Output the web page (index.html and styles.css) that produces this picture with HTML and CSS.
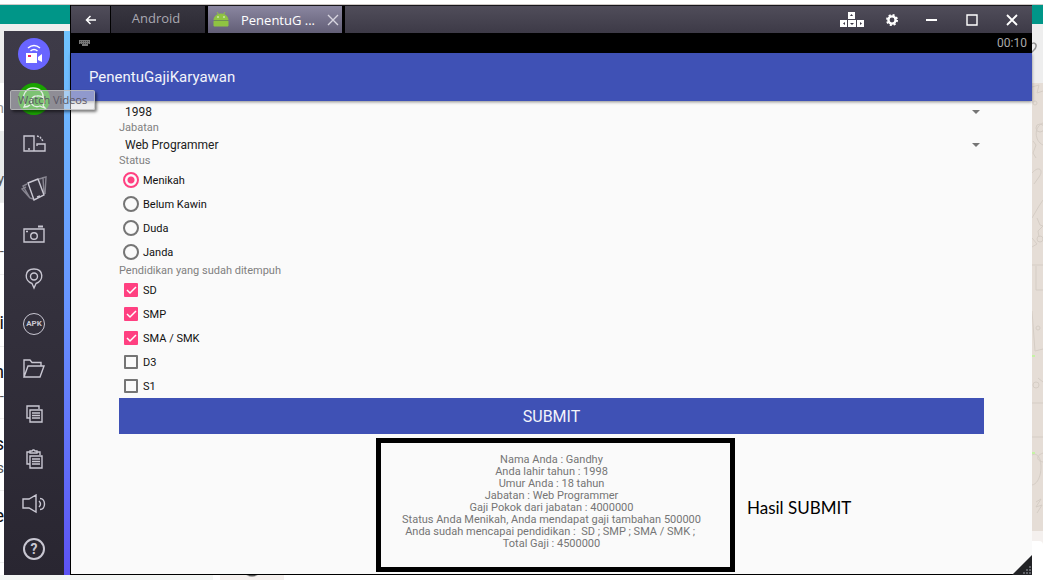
FILE: index.html
```html
<!DOCTYPE html>
<html lang="id">
<head>
<meta charset="utf-8">
<title>PenentuGajiKaryawan</title>
<link rel="stylesheet" href="styles.css">
</head>
<body>
<div class="desktop">
  <div class="backdrop" aria-hidden="true">
    <div class="backdrop-teal"></div>
    <div class="backdrop-main">
      <div class="chat-list">
        <div class="chat-head"></div>
        <div class="chat-search">n</div>
        <div class="chat-row selected"><span></span><span>y</span></div>
        <div class="chat-row"><span></span><span>-</span></div>
        <div class="chat-row"><span></span><b>i</b></div>
        <div class="chat-row"><b>m</b><span>-</span></div>
        <div class="chat-row"><b>s</b><span>s</span></div>
        <div class="chat-row"><b>e</b><span></span></div>
      </div>
      <div class="chat-pane">
        <svg class="pane-head" viewBox="0 0 11 59"><path d="M-2 21c5-5 9 1 3 6l-3 3" fill="none" stroke="#919191" stroke-width="1.5"/></svg>
        <svg class="doodles" viewBox="0 0 11 448" preserveAspectRatio="none"><g fill="none" stroke="#d5cdc5"><path d="M0 4l7-2-2 8 6-2M11 40c-9 3-9 18 0 22M1 58l3 4-3 8 3 5M0 90c7-8 12-3 7 4l-5 7M0 135l7-12 4-6M5 135l3 7 3 1-5 5 1 6M0 155l5 6-5 3M0 182h11M4 183v24h7M0 228l3 40 8-2M6 295l5 4M0 320h11M0 354h11M0 372c12-6 12 28 0 30M11 370c-8 3-6 8 0 9M4 419l5-3-5 8 6-2-5 8"/><circle cx="3" cy="20" r="2"/><circle cx="8" cy="45" r="4"/><circle cx="8" cy="156" r="3"/><circle cx="6" cy="245" r="2"/><circle cx="4" cy="302" r="3"/></g><path d="M0 273h3M0 370h3" stroke="#c5f3a5" stroke-width="2"/></svg>
        <div class="composer"></div>
      </div>
    </div>
    <div class="backdrop-foot"><i></i><b></b></div>
  </div>

  <div class="emulator">
    <nav class="sidebar" aria-label="Tools">
      <button class="tool" aria-label="Record"><svg viewBox="0 0 34 34" width="34" height="34"><circle cx="17" cy="17" r="16" fill="#6965ff"/><path d="M11 11q6-5 12 0M13.500 14q3.500-3 7 0" fill="none" stroke="#fff" stroke-width="1.500"/><path d="M9 16h11v10H9zM21 20l4-3v8l-4-2z" fill="#fff"/><rect x="11" y="18" width="3" height="2" fill="#f0245a"/></svg></button>
      <button class="tool" aria-label="Watch Videos"><svg viewBox="0 0 34 34" width="34" height="34"><circle cx="17" cy="17" r="16" fill="#19a300"/><g fill="none" stroke="#e6f7e2" stroke-width="1.300"><path d="M13 23c-2 2-4 2-6 2 1-2 2-3 1-5-4-6 1-14 8-14s11 5 10 10"/><path d="M26 23c4-4 0-10-6-9-6 0-8 7-3 10 2 1 4 1 6 0 2 1 4 2 5 2-1-1-2-2-2-3z"/></g></svg></button>
      <button class="tool" aria-label="Rotate"><svg viewBox="0 0 24 20" width="24" height="20"><g class="line"><path d="M2 2h10v15H2zM15 12v-2h8v7H12M6 15h2"/><path d="M15 2l3 1 3 4" stroke-dasharray="2 1"/></g></svg></button>
      <button class="tool" aria-label="Shake"><svg viewBox="0 0 28 26" width="28" height="26"><g class="line"><path d="M8 7l10-4 6 16-10 5z"/><path d="M17 21l3-1"/><path d="M7 8l-4 2 7 12 3 1M6 11l-4 2 8 9M19 3l4-1 1 16M22 2l4-1-1 17" opacity=".55"/></g></svg></button>
      <button class="tool" aria-label="Screenshot"><svg viewBox="0 0 24 20" width="24" height="20"><g class="line"><path d="M2 5h20v13H2z"/><circle cx="12" cy="12" r="3.300"/><path d="M16 2.500h5" stroke-width="2"/><path d="M4 7.500h2"/></g></svg></button>
      <button class="tool" aria-label="Location"><svg viewBox="0 0 20 24" width="20" height="24"><g class="line"><path d="M10 21l-2-4.500C-0 14 0 2 10 2s10 12 2 14.500z"/><circle cx="10" cy="9.500" r="3.500"/></g></svg></button>
      <button class="tool" aria-label="Install APK"><span class="apk">APK</span></button>
      <button class="tool" aria-label="Open folder"><svg viewBox="0 0 24 22" width="24" height="22"><g class="line"><path d="M2 19V2h6l2 2.500h9V8M2 19h16l4-11H6z"/></g></svg></button>
      <button class="tool" aria-label="Copy"><svg viewBox="0 0 20 20" width="20" height="20"><g class="line"><path d="M6 14H3V2h12v3M6 6h12v12H6zM8 9h8M8 11.500h8M8 14h8"/></g></svg></button>
      <button class="tool" aria-label="Paste"><svg viewBox="0 0 20 22" width="20" height="22"><g class="line"><path d="M6 16H3V4h3M13 4h3v3M6 5h7V3h-2l-1-1H9L8 3H6zM6 8h12v12H6zM8 11h8M8 13.500h8M8 16h8"/></g></svg></button>
      <button class="tool" aria-label="Volume"><svg viewBox="0 0 24 20" width="24" height="20"><g class="line"><path d="M1 5h6l7-4v17l-7-4H1zM17 7q3 3 0 6M18 4.500c6 0 6 11 0 11"/></g></svg></button>
      <button class="tool" aria-label="Help"><span class="help">?</span></button>
    </nav>
    <div class="glow"></div>

    <main class="window">
      <header class="titlebar">
        <button class="bar-item back" aria-label="Back"><svg viewBox="0 0 12 10" width="12" height="10"><path d="M11 5H2M5.500 1l-4 4 4 4" fill="none" stroke="#fff" stroke-width="1.500"/></svg></button>
        <button class="bar-item tab">Android</button>
        <div class="bar-item tab active">
          <svg viewBox="0 0 16 16" width="16" height="16"><path d="M1 8c0-8 14-8 14 0zM1 9h14v5H1zM4 0l2 3M12 0l-2 3" fill="#8fc442" stroke="#8fc442"/><path d="M1 8.500h14" stroke="#6f8f52"/><path d="M4 5h2M10 5h2" stroke="#e8f5d8"/></svg>
          <span>PenentuG ...</span>
          <button class="close-tab" aria-label="Close tab"><svg viewBox="0 0 12 12" width="12" height="12"><path d="M1 1l10 10M11 1L1 11" stroke="#d8d6e0" stroke-width="1.400"/></svg></button>
        </div>
        <div class="bar-item controls">
          <button aria-label="Keys"><svg viewBox="0 0 24 16" width="24" height="16"><path d="M8 0h7v7H8zM0 8h7v7H0zM8 8h8v7H8zM17 8h7v7h-7z" fill="#fff"/><path d="M10 4l1.500-2L13 4zM5 10v3l-2-1.500zM10 11h4l-2 2zM20 10v3l2-1.500z" fill="#3c3947"/></svg></button>
          <button aria-label="Settings"><svg viewBox="0 0 12 12" width="12" height="12"><circle cx="6" cy="6" r="3.600" fill="none" stroke="#fff" stroke-width="2.400"/><circle cx="6" cy="6" r="5" fill="none" stroke="#fff" stroke-width="2" stroke-dasharray="2 1.927"/></svg></button>
          <button aria-label="Minimize"><svg viewBox="0 0 12 12" width="12" height="12"><path d="M0 6h11" stroke="#fff" stroke-width="2"/></svg></button>
          <button aria-label="Maximize"><svg viewBox="0 0 12 12" width="12" height="12"><path d="M1 1h10v10H1z" fill="none" stroke="#fff" stroke-width="1.400"/></svg></button>
          <button aria-label="Close"><svg viewBox="0 0 12 12" width="12" height="12"><path d="M1 1l10 10M11 1L1 11" stroke="#fff" stroke-width="1.800"/></svg></button>
        </div>
      </header>
      <div class="statusbar">
        <svg viewBox="0 0 11 7" width="11" height="7"><path d="M0 0h11v4H9v2H3V4H0z" fill="#777"/><path d="M1 1.500h9M1 3.500h9" stroke="#444" stroke-dasharray="1 1"/></svg>
        <time>00:10</time>
      </div>
      <h1 class="appbar">PenentuGajiKaryawan</h1>

      <form class="form" onsubmit="return false">
        <div class="picker">
          <select aria-label="Tahun lahir"><option>1998</option></select>
          <svg viewBox="0 0 8 4" width="8" height="4"><path d="M0 0h8L4 4z" fill="#757575"/></svg>
        </div>
        <label class="caption" for="jabatan">Jabatan</label>
        <div class="picker">
          <select id="jabatan"><option>Web Programmer</option></select>
          <svg viewBox="0 0 8 4" width="8" height="4"><path d="M0 0h8L4 4z" fill="#757575"/></svg>
        </div>
        <div class="caption" id="status">Status</div>
        <div role="radiogroup" aria-labelledby="status">
          <label class="choice"><input type="radio" name="status" checked>Menikah</label>
          <label class="choice"><input type="radio" name="status">Belum Kawin</label>
          <label class="choice"><input type="radio" name="status">Duda</label>
          <label class="choice"><input type="radio" name="status">Janda</label>
        </div>
        <div class="caption" id="pendidikan">Pendidikan yang sudah ditempuh</div>
        <div role="group" aria-labelledby="pendidikan">
          <label class="choice"><span class="box"><input type="checkbox" checked><svg viewBox="0 0 14 14"><path d="M3 7l3 3 6-6"/></svg></span>SD</label>
          <label class="choice"><span class="box"><input type="checkbox" checked><svg viewBox="0 0 14 14"><path d="M3 7l3 3 6-6"/></svg></span>SMP</label>
          <label class="choice"><span class="box"><input type="checkbox" checked><svg viewBox="0 0 14 14"><path d="M3 7l3 3 6-6"/></svg></span>SMA / SMK</label>
          <label class="choice"><span class="box"><input type="checkbox"></span>D3</label>
          <label class="choice"><span class="box"><input type="checkbox"></span>S1</label>
        </div>
        <button class="submit" type="submit">SUBMIT</button>
        <div class="result-row">
          <output class="result">Nama Anda : Gandhy
Anda lahir tahun : 1998
Umur Anda : 18 tahun
Jabatan : Web Programmer
Gaji Pokok dari jabatan : 4000000
Status Anda Menikah, Anda mendapat gaji tambahan 500000
Anda sudah mencapai pendidikan :  SD ; SMP ; SMA / SMK ; 
Total Gaji : 4500000</output>
          <p class="note">Hasil SUBMIT</p>
        </div>
      </form>
      <svg class="grip" viewBox="0 0 20 20" width="20" height="20"><path d="M20 0v20H0z" fill="#222326"/><path d="M17 12h2M14 15h2M17 15h2M11 18h2M14 18h2M17 18h2" stroke="#606268" stroke-width="2"/></svg>
    </main>
  </div>
  <div class="tooltip" role="tooltip">Watch Videos</div>
</div>
</body>
</html>
```

FILE: styles.css
```css
* { box-sizing: border-box; }

body {
  margin: 0;
  background: #fff;
  font-family: Roboto, "Liberation Sans", sans-serif;
}

button {
  margin: 0;
  padding: 0;
  border: 0;
  background: none;
  color: inherit;
  font: inherit;
}

svg { display: block; flex: none; }

.desktop {
  position: relative;
  display: flex;
  min-height: 100vh;
  overflow: hidden;
}

/* browser page behind the emulator */
.backdrop {
  position: absolute;
  inset: 0;
  display: flex;
  flex-direction: column;
  border-top: 4px solid #fff;
}

.backdrop-teal {
  height: 20px;
  border-top: 1px solid #cfc9c6;
  background: #009688;
}

.backdrop-main {
  flex: 1;
  display: flex;
  justify-content: space-between;
  min-height: 0;
  background: #eee;
}

.chat-list {
  display: flex;
  flex-direction: column;
  width: 4px;
  overflow: hidden;
  background: #fff;
  font-size: 15px;
  line-height: 24px;
}

.chat-head { height: 59px; background: #eee; }

.chat-search {
  display: flex;
  justify-content: flex-end;
  height: 48px;
  padding-top: 13px;
  color: #999;
}

.chat-row {
  display: flex;
  flex-direction: column;
  align-items: flex-end;
  height: 72px;
  padding: 13px 0 11px;
  border-bottom: 1px solid #eee;
  color: #555;
}

.chat-row b { color: #111; font-weight: 400; font-size: 18px; }
.chat-row span { height: 24px; }
.chat-row.selected { background: #e9ebeb; }

.chat-pane {
  display: flex;
  flex-direction: column;
  width: 11px;
  background: #f4f0ee;
}

.pane-head { width: 11px; height: 59px; background: #eee; }
.doodles { flex: 1; width: 11px; min-height: 0; background: #e5ddd6; }
.composer { height: 34px; margin-top: 10px; border-radius: 0 4px 0 0; background: #fff; }

.backdrop-foot {
  display: flex;
  gap: 7px;
  height: 5px;
  background: #fff;
}

.backdrop-foot i { width: 213px; background: #f4f6f5; }
.backdrop-foot b { width: 64px; background: radial-gradient(ellipse 6px 2px at 50% 0, #555 50%, #f5f0ee); }

/* emulator */
.emulator {
  position: relative;
  flex: 1;
  display: flex;
  min-width: 0;
  margin: 5px 11px 5px 4px;
}

.sidebar {
  display: flex;
  flex-direction: column;
  width: 60px;
  margin-top: 26px;
  background: linear-gradient(#3e3b48, #292631);
}

.tool {
  display: flex;
  align-items: center;
  justify-content: center;
  height: 45px;
}

.line {
  fill: none;
  stroke: #c9c7d2;
  stroke-width: 1.4px;
}

.apk,
.help {
  display: flex;
  align-items: center;
  justify-content: center;
  width: 22px;
  height: 22px;
  border: 1px solid #c9c7d2;
  border-radius: 50%;
  color: #c9c7d2;
  font-size: 8px;
  font-weight: 700;
}

.help {
  border-width: 2px;
  font-size: 14px;
}

.glow {
  width: 6px;
  margin-top: 26px;
  background: linear-gradient(#70c4ff, #6794ff 50%, #5c52f2);
}

.window {
  position: relative;
  flex: 1;
  display: flex;
  flex-direction: column;
  min-width: 0;
  border: solid #000;
  border-width: 0 0 1px 1px;
  background: #fafafa;
}

.titlebar {
  display: flex;
  height: 28px;
  border-top: 1px solid #17161b;
  background: #000;
  color: #fff;
  font-family: "Open Sans", "Noto Sans", sans-serif;
  font-size: 13px;
}

.bar-item {
  display: flex;
  align-items: center;
  justify-content: center;
  background: linear-gradient(#504d5a, #3d3a47);
}

.back { width: 39px; margin-right: 1px; }

.tab {
  width: 94px;
  padding: 0 4px 3px 0;
  margin-right: 3px;
  background: linear-gradient(#383640, #2b2933);
  color: #aaa8b2;
}

.tab.active {
  gap: 12px;
  width: 134px;
  padding: 0 4px 0 6px;
  background: linear-gradient(#8a86a0, #625e76);
  color: #fff;
}

.tab span { flex: 1; white-space: nowrap; }

.controls { flex: 1; justify-content: flex-end; }

.controls button {
  display: flex;
  align-items: center;
  justify-content: center;
  width: 40px;
  height: 27px;
}

.statusbar {
  display: flex;
  align-items: center;
  justify-content: space-between;
  height: 20px;
  padding: 0 5px 0 8px;
  background: #000;
  color: #aaa;
  font-size: 12px;
}

.appbar {
  height: 48px;
  margin: 0;
  padding: 0 18px;
  background: #3f51b5;
  box-shadow: 0 1px 3px rgba(0, 0, 0, .45);
  color: #f3f4fb;
  font-size: 15px;
  font-weight: 400;
  line-height: 48px;
}

.form { padding: 1px 48px 0; }

.picker {
  display: flex;
  align-items: center;
  height: 19px;
  padding: 0 4px 0 6px;
}

.picker select {
  flex: 1;
  padding: 0;
  border: 0;
  appearance: none;
  background: none;
  color: #212121;
  font: 12px/20px Roboto, sans-serif;
}

.caption {
  display: block;
  color: #808080;
  font-size: 11px;
  line-height: 14px;
}

.choice {
  display: flex;
  align-items: center;
  gap: 4px;
  height: 24px;
  padding-left: 4px;
  color: #111;
  font-size: 11px;
}

.choice input {
  appearance: none;
  margin: 0;
  border: 2px solid #757575;
}

.choice input[type="radio"] {
  width: 16px;
  height: 16px;
  border-radius: 50%;
}

.choice input[type="radio"]:checked {
  border-color: #ff4081;
  background: radial-gradient(circle, #ff4081 3px, transparent 4px);
}

.box { display: grid; padding: 0 1px; }
.box > * { grid-area: 1 / 1; width: 14px; height: 14px; }
.box input { border-radius: 1px; }
.box input:checked { border-color: #ff4081; background: #ff4081; }

.box path {
  fill: none;
  stroke: #fff;
  stroke-width: 1.5px;
}

.submit {
  display: block;
  width: 100%;
  height: 36px;
  background: #3f51b5;
  color: #f3f4fb;
  font-size: 16px;
}

.result-row {
  display: grid;
  grid-template-columns: 1fr auto 1fr;
  align-items: center;
  margin-top: 4px;
  padding-left: 8px;
}

.result {
  grid-column: 2;
  padding: 11px 29px 17px 21px;
  border: 5px solid #000;
  color: #757575;
  font-size: 11px;
  line-height: 12px;
  text-align: center;
  white-space: pre;
}

.note {
  margin: 6px 0 0 12px;
  color: #000;
  font-family: Lato, sans-serif;
  font-size: 17px;
  line-height: 20px;
  white-space: nowrap;
}

.grip { position: absolute; right: 0; bottom: -1px; }

.tooltip {
  position: absolute;
  left: 10px;
  top: 90px;
  padding: 0 7px;
  border: 1px solid rgba(190, 190, 190, .8);
  border-radius: 2px;
  background: rgba(225, 225, 230, .5);
  box-shadow: 2px 2px 3px rgba(0, 0, 0, .5);
  color: #5b5865;
  font: 11px/18px "Open Sans", sans-serif;
}
```
